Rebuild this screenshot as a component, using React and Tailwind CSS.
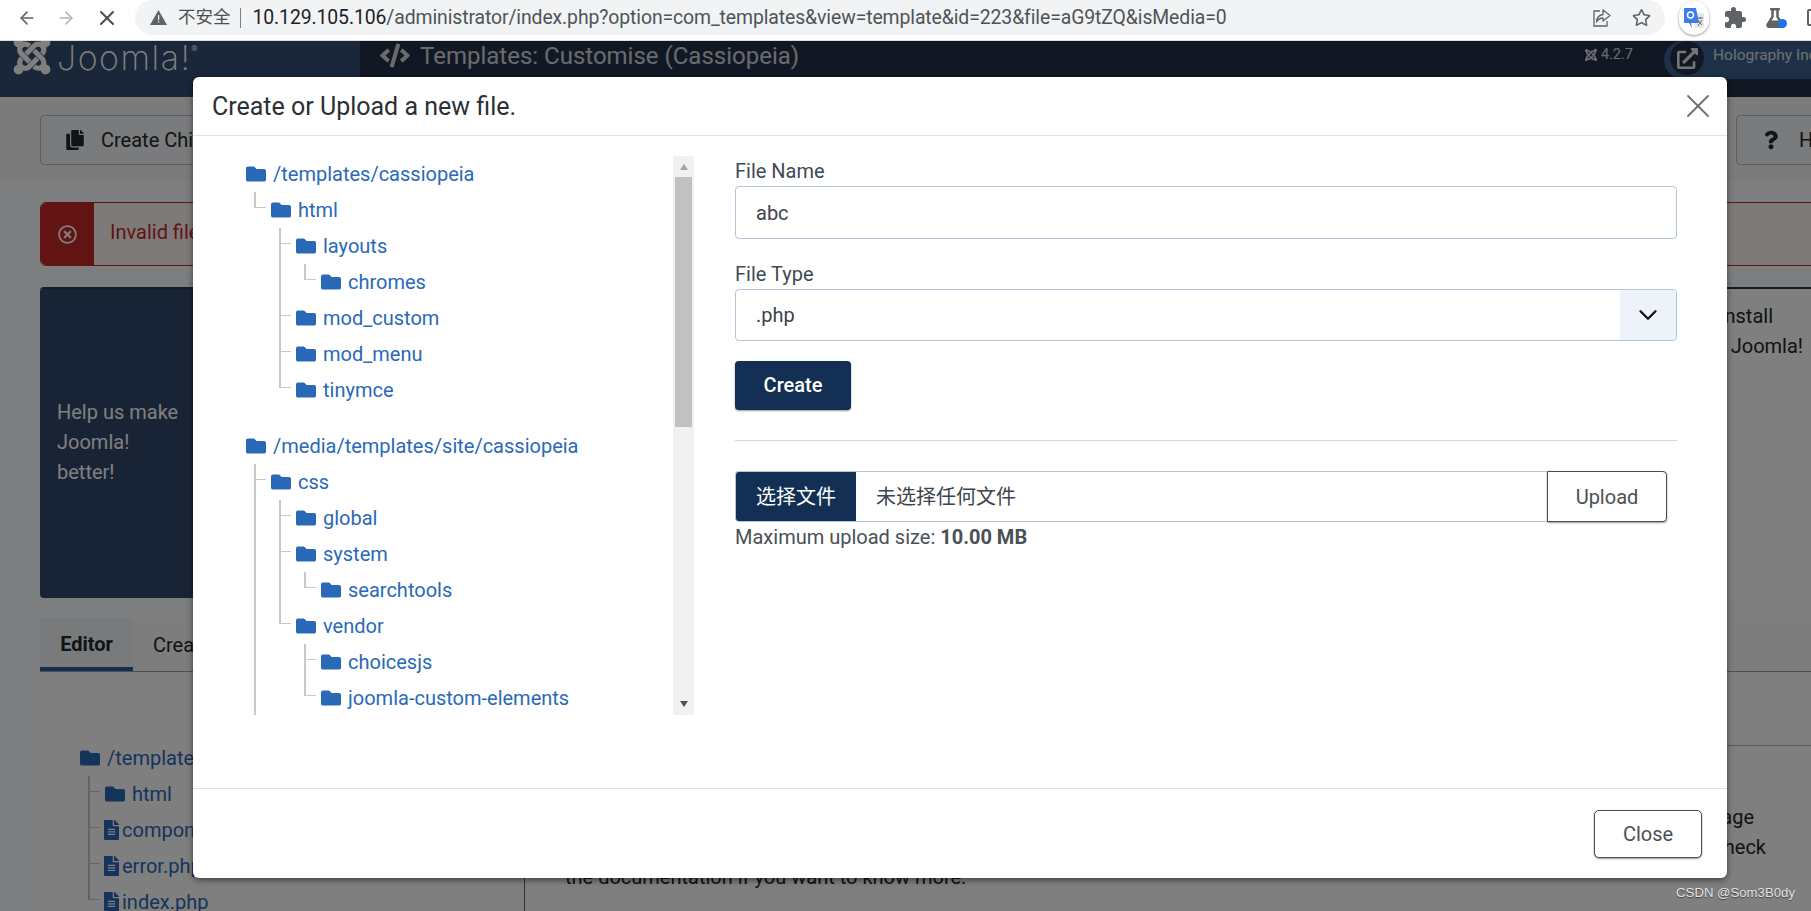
import React from "react";
import { FaFolder, FaFileAlt, FaCopy, FaQuestion, FaRegTimesCircle, FaJoomla, FaCode, FaFlask, FaRegStar, FaExternalLinkAlt } from "react-icons/fa";
import { MdExtension } from "react-icons/md";
import { ArrowLeft, ArrowRight, X, ChevronDown } from "lucide-react";

const tree1 = [
  { name: "/templates/cassiopeia", kids: [
    { name: "html", kids: [
      { name: "layouts", kids: [{ name: "chromes" }] },
      { name: "mod_custom" },
      { name: "mod_menu" },
      { name: "tinymce" },
    ] },
  ] },
  { name: "/media/templates/site/cassiopeia", more: true, kids: [
    { name: "css", kids: [
      { name: "global" },
      { name: "system", kids: [{ name: "searchtools" }] },
      { name: "vendor", kids: [{ name: "choicesjs" }, { name: "joomla-custom-elements" }] },
    ] },
  ] },
];

const tree2 = [
  { name: "/templates/cassiopeia", kids: [
    { name: "html" },
    { name: "component.php", file: true },
    { name: "error.php", file: true },
    { name: "index.php", file: true },
  ] },
];

function Row({ node }) {
  return (
    <div className="flex h-[36px] items-center text-[20px] text-[#2a69b8] whitespace-nowrap">
      {node.file ? (
        <FaFileAlt className="mr-[3px] ml-[-1px] h-[20px] w-[15px] shrink-0" />
      ) : (
        <FaFolder className="mr-[7px] h-[20px] w-[20px] shrink-0" />
      )}
      <span>{node.name}</span>
    </div>
  );
}

function Branch({ nodes, more }) {
  return (
    <ul className="ml-[8px]">
      {nodes.map((n, i) => {
        const last = i === nodes.length - 1 && !more;
        return (
          <li key={n.name} className="relative pl-[17px]">
            <span className={`absolute left-0 top-0 w-[2px] bg-[#c8c8c8] ${last ? "h-[15px]" : "h-full"}`} />
            <span className="absolute left-0 top-[15px] h-[1px] w-[12px] bg-[#c8c8c8]" />
            <Row node={n} />
            {n.kids && <Branch nodes={n.kids} />}
          </li>
        );
      })}
    </ul>
  );
}

function Tree({ roots }) {
  return (
    <div className="flex flex-col gap-[20px]">
      {roots.map((r) => (
        <div key={r.name}>
          <Row node={r} />
          {r.kids && <Branch nodes={r.kids} more={r.more} />}
        </div>
      ))}
    </div>
  );
}

function Translate() {
  return (
    <div className="flex h-[34px] w-[30px] shrink-0 items-center justify-center rounded-full bg-white shadow-[0_1px_3px_rgba(0,0,0,0.4)]">
      <svg width="24" height="24" viewBox="0 0 24 24">
        <path d="M12 7h9a1 1 0 0 1 1 1v13a1 1 0 0 1-1 1h-8z" fill="#e4e6ea" />
        <path d="M3 2h11l3 15H9l1 5-3-5H3a1 1 0 0 1-1-1V3a1 1 0 0 1 1-1z" fill="#3f7de8" />
        <circle cx="8.500" cy="9" r="3" fill="none" stroke="#fff" strokeWidth="1.400" />
        <path d="M15 12h6M18 11v2M16 20l4-6M16 14l4 5" stroke="#666" strokeWidth="1" fill="none" />
      </svg>
    </div>
  );
}

function ChromeBar() {
  return (
    <div className="relative z-10 flex h-[41px] w-full shrink-0 items-start border-b border-[#dcdcdc] bg-white font-['Roboto','Noto_Sans_CJK_SC',sans-serif]">
      <div className="flex h-[35px] w-[135px] shrink-0 items-center pl-[17px] text-[#555]">
        <ArrowLeft className="h-[20px] w-[20px] text-[#5f6368]" strokeWidth={2} />
        <ArrowRight className="ml-[19px] h-[20px] w-[20px] text-[#b4b6b9]" strokeWidth={2} />
        <X className="ml-[19px] h-[24px] w-[24px] text-[#4a4d51]" strokeWidth={2} />
      </div>
      <div className="flex h-[35px] w-[1530px] shrink-0 items-center rounded-[18px] bg-[#f1f3f4] pl-[15px] pr-[14px]">
        <svg width="17" height="15" viewBox="0 0 17 15" className="shrink-0"><path d="M8.500 0 17 15H0z" fill="#5f6368" /><path d="M8 5h1.200v5H8zM8 11h1.200v1.500H8z" fill="#f1f3f4" /></svg>
        <span className="ml-[11px] text-[17.500px] text-[#4c4f53]">不安全</span>
        <span className="ml-[9px] mr-[12px] h-[20px] w-[1px] bg-[#7d8185]" />
        <span className="text-[19.400px] tracking-[-0.100px] text-[#4f5357] whitespace-nowrap"><span className="text-[#1f2225]">10.129.105.106</span>/administrator/index.php?option=com_templates&amp;view=template&amp;id=223&amp;file=aG9tZQ&amp;isMedia=0</span>
        <div className="ml-auto flex items-center gap-[20px] text-[#5f6368]">
          <svg width="20" height="20" viewBox="0 0 20 20" fill="none" stroke="#5f6368" strokeWidth="1.300"><path d="M8 3H2v15h13v-5" /><path d="M11 2l7 5.500-7 5.500V10c-3 0-5 1-6.500 4 .3-4.500 2.500-7 6.500-7.500z" strokeLinejoin="round" /></svg>
          <FaRegStar className="h-[19px] w-[19px]" />
        </div>
      </div>
      <div className="flex h-[35px] flex-1 items-center pl-[14px] text-[#5f6368]">
        <Translate />
        <MdExtension className="ml-[14px] h-[24px] w-[24px] shrink-0" />
        <div className="relative ml-[18px] shrink-0">
          <FaFlask className="h-[20px] w-[20px]" />
          <span className="absolute bottom-0 right-[-2px] h-[9px] w-[9px] rounded-full bg-[#1a73e8]" />
        </div>
        <span className="ml-[22px] h-[17px] w-[12px] shrink-0 rounded-[2px] border-2 border-[#5f6368]" />
      </div>
    </div>
  );
}

function PageBehind() {
  return (
    <div className="flex w-[1860px] flex-1 flex-col bg-[#fdfdfd] font-['Roboto',sans-serif] text-[20px] text-[#22262a]">
      <header className="flex h-[56px] shrink-0 bg-[#223048]">
        <div className="flex w-[360px] shrink-0 items-start overflow-hidden bg-[#344c72] pl-[12px] text-[#fff]">
          <FaJoomla className="mt-[-6px] h-[42px] w-[40px] shrink-0 text-[#ffffff]" />
          <span className="ml-[5px] mt-[1px] font-['Inter',sans-serif] text-[34px] font-extralight leading-[32px] tracking-[1.500px]">Joomla!</span>
          <span className="mt-[3px] text-[8px] leading-[10px]">®</span>
        </div>
        <div className="flex items-start pl-[20px] pt-[0px] text-[#ffffff]">
          <FaCode className="mt-[1px] h-[27px] w-[30px] opacity-80" />
          <span className="ml-[10px] text-[24px] leading-[30px] whitespace-nowrap opacity-80">Templates: Customise (Cassiopeia)</span>
        </div>
        <div className="ml-auto flex">
          <div className="mr-[31px] flex items-start pt-[3px] text-[14.500px] text-white opacity-80">
            <FaJoomla className="mt-[4px] h-[14px] w-[14px]" />
            <span className="ml-[3px]">4.2.7</span>
          </div>
          <div className="flex h-[38px] w-[196px] items-start rounded-bl-[19px] rounded-tl-[19px] bg-[#3c6090] pl-[6px] text-[15.500px] text-white">
            <span className="flex h-[34px] w-[34px] shrink-0 items-center justify-center rounded-full bg-[#223048]">
              <FaExternalLinkAlt className="h-[21px] w-[21px] opacity-90" />
            </span>
            <span className="ml-[9px] mt-[2px] leading-[24px] whitespace-nowrap opacity-80">Holography Inc</span>
          </div>
        </div>
      </header>

      <div className="flex h-[85px] shrink-0 items-center justify-between bg-[#f6f6f6] px-[40px]">
        <button className="flex h-[50px] items-center rounded-[4px] border border-[#b2bfcd] bg-[#f4f6f8] pl-[25px] pr-[30px]">
          <FaCopy className="mr-[17px] h-[20px] w-[18px]" />
          Create Child Template
        </button>
        <button className="flex h-[50px] w-[84px] items-center rounded-[4px] border border-[#b2bfcd] bg-[#f4f6f8] pl-[27px] whitespace-nowrap">
          <FaQuestion className="mr-[21px] h-[20px] w-[14px] shrink-0" />
          Help
        </button>
      </div>

      <div className="flex flex-1 flex-col bg-[#fafcff] px-[40px] pt-[20px]">
        <div className="flex h-[64px] shrink-0 items-stretch overflow-hidden rounded-[6px] border border-[#c52827] bg-[#fdf4f4] text-[#c52827]">
          <span className="flex w-[53px] items-center justify-center bg-[#c52827] text-white">
            <FaRegTimesCircle className="h-[19px] w-[19px]" />
          </span>
          <span className="ml-[16px] mt-[-4px] self-center">Invalid file type</span>
        </div>

        <div className="mt-[21px] flex h-[311px] shrink-0 overflow-hidden rounded-[4px] border-t-2 border-[#22385a] bg-white">
          <div className="flex w-[300px] shrink-0 flex-col justify-center bg-[#30486a] pb-[3px] pl-[17px] leading-[30px] text-white">
            <p>Help us make</p>
            <p>Joomla!</p>
            <p>better!</p>
          </div>
          <div className="flex-1 pt-[12px] leading-[30px]">
            <p className="w-[1433px] text-right">If you want to help us install</p>
            <p className="w-[1463px] text-right">the latest version of Joomla!</p>
          </div>
        </div>

        <div className="mt-[20px] flex h-[54px] shrink-0 border-b border-[#9aa3ad] bg-[#fbfbfb]">
          <span className="flex w-[93px] items-center justify-center border-b-4 border-[#2a5d9e] bg-[#f1f4f8] pt-[2px] font-bold">Editor</span>
          <span className="ml-[20px] flex items-center">Create Overrides</span>
        </div>

        <div className="flex flex-1 bg-[#ffffff]">
          <div className="w-[484px] shrink-0 pl-[40px] pt-[68px]">
            <Tree roots={tree2} />
          </div>
          <div className="flex-1 border-l border-[#5a6a85] pt-[73px]">
            <div className="border-t border-[#9fb0cc] pt-[56px] leading-[30px]">
              <p className="w-[1229px] text-right">Choose a file on the left to edit or view the page</p>
              <p className="w-[1241px] text-right">and make your changes, then save them and check</p>
              <p className="ml-[40px] whitespace-nowrap">the documentation if you want to know more.</p>
            </div>
          </div>
        </div>
      </div>
    </div>
  );
}

function Modal() {
  return (
    <div className="absolute left-[193px] top-[77px] flex h-[801px] w-[1534px] flex-col rounded-[6px] bg-white font-['Roboto','Noto_Sans_CJK_SC',sans-serif] text-[20px] text-[#22262a] shadow-[0_2px_6px_rgba(0,0,0,0.5)]">
      <div className="flex h-[59px] shrink-0 items-center justify-between border-b border-[#dfe3e7] pl-[19px] pr-[9px]">
        <h2 className="text-[25px] font-normal leading-none text-[#2b3035]">Create or Upload a new file.</h2>
        <X className="h-[40px] w-[40px] text-[#6f6f6f]" strokeWidth={1.100} />
      </div>

      <div className="flex flex-1 pt-[20px]">
        <div className="flex h-[559px] w-[501px] shrink-0 pl-[53px]">
          <div className="h-full flex-1 overflow-hidden">
            <Tree roots={tree1} />
          </div>
          <div className="flex h-full w-[21px] shrink-0 flex-col items-center bg-[#f1f1f1]">
            <span className="mt-[8px] h-0 w-0 border-x-[4.500px] border-b-[6px] border-x-transparent border-b-[#a3a3a3]" />
            <span className="mt-[7px] h-[250px] w-[17px] bg-[#c1c1c1]" />
            <span className="mt-auto mb-[8px] h-0 w-0 border-x-[4.500px] border-t-[6px] border-x-transparent border-t-[#505050]" />
          </div>
        </div>

        <div className="ml-[41px] w-[942px] shrink-0 text-[#3f4a56]">
          <label className="block pt-[1px] leading-[28px]">File Name</label>
          <input readOnly value="abc" className="mt-[1px] block h-[53px] w-full rounded-[4px] border border-[#b2c6de] px-[20px] text-[20px] text-[#3c444c] outline-none" />
          <label className="mt-[21px] block leading-[28px]">File Type</label>
          <div className="mt-[1px] flex h-[52px] w-full items-stretch overflow-hidden rounded-[4px] border border-[#b2c6de]">
            <span className="flex flex-1 items-center pl-[20px] text-[#3c444c]">.php</span>
            <span className="flex w-[56px] items-center justify-center bg-[#eef3fa] text-[#111]">
              <ChevronDown className="h-[30px] w-[30px]" strokeWidth={1.800} />
            </span>
          </div>
          <button className="mt-[20px] block h-[49px] w-[116px] rounded-[4px] bg-[#132f53] pb-[2px] text-[20px] font-medium text-white shadow-[0_1px_2px_rgba(0,0,0,0.4)]">Create</button>
          <hr className="mt-[30px] border-t border-[#d6d6d6]" />
          <div className="mt-[30px] flex h-[51px] w-[932px] items-stretch">
            <div className="flex flex-1 items-stretch overflow-hidden rounded-l-[4px] border border-r-0 border-[#b2c6de]">
              <span className="flex w-[120px] items-center justify-center bg-[#132f53] text-white">选择文件</span>
              <span className="flex items-center pl-[20px] text-[#3c444c]">未选择任何文件</span>
            </div>
            <button className="h-[51px] w-[120px] rounded-r-[4px] border border-[#4c4c4c] bg-white text-[#495057] shadow-[0_1px_2px_rgba(0,0,0,0.4)]">Upload</button>
          </div>
          <p className="leading-[30px] text-[#495057]">Maximum upload size: <strong className="font-bold">10.00 MB</strong></p>
        </div>
      </div>

      <div className="flex h-[90px] shrink-0 items-start justify-end border-t border-[#dfe3e7] pr-[25px] pt-[21px]">
        <button className="h-[48px] w-[108px] rounded-[5px] border border-[#4c4c4c] bg-white text-[20px] text-[#495057] shadow-[0_1px_2px_rgba(0,0,0,0.4)]">Close</button>
      </div>
    </div>
  );
}

export default function App() {
  return (
    <div className="relative flex h-[911px] w-[1811px] flex-col overflow-hidden bg-white">
      <ChromeBar />
      <PageBehind />
      <div className="absolute inset-x-0 bottom-0 top-[41px] bg-black/50" />
      <Modal />
      <span className="absolute bottom-[8px] right-[16px] font-['Liberation_Sans',sans-serif] text-[13.200px] text-[#e2e2e2] [text-shadow:0_1px_1px_rgba(0,0,0,0.5)]">CSDN @Som3B0dy</span>
    </div>
  );
}
